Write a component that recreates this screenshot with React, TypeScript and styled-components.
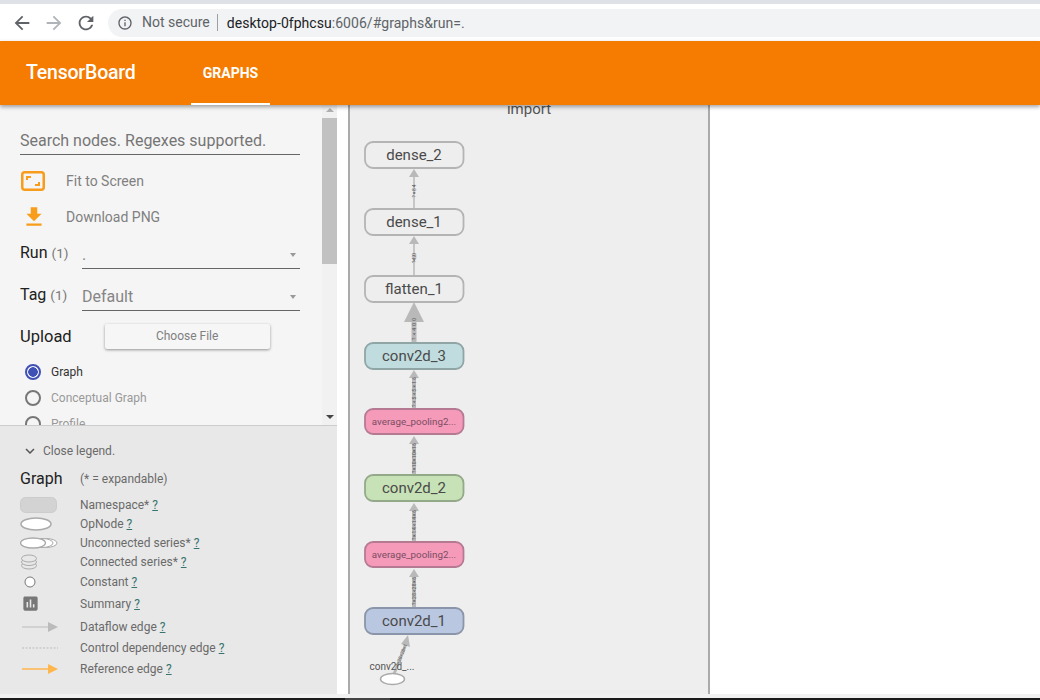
import * as React from 'react'
import styled, { createGlobalStyle } from 'styled-components'
import { MdArrowBack, MdArrowForward, MdRefresh, MdInfoOutline, MdFileDownload, MdExpandMore, MdAssessment } from 'react-icons/md'

const GlobalStyle = createGlobalStyle`
  html, body {
    margin: 0;
    padding: 0;
    background: #fff;
    font-family: Roboto, "Liberation Sans", sans-serif;
  }
`

const Page = styled.div`
  width: 1040px;
  height: 700px;
  display: flex;
  flex-direction: column;
  overflow: hidden;
`

const TabStrip = styled.div`
  height: 4px;
  background: #dee1e6;
`

const BrowserBar = styled.div`
  height: 37px;
  display: flex;
  align-items: center;
  padding-left: 11px;
  background: #fff;
  color: #5f6368;
`

const NavButton = styled.span<{ $muted?: boolean; $last?: boolean }>`
  width: ${p => (p.$last ? 33 : 32)}px;
  height: 24px;
  display: flex;
  align-items: center;
  color: ${p => (p.$muted ? '#b0b3b7' : '#5f6368')};
  font-size: 22px;
`

const AddressPill = styled.div`
  flex: 1;
  height: 28px;
  padding-left: 9px;
  display: flex;
  align-items: center;
  background: #f1f3f4;
  border-radius: 14px 0 0 14px;
  font-size: 14px;
`

const NotSecure = styled.span`
  margin-left: 9px;
  padding-right: 7px;
  color: #5f6368;
  border-right: 1px solid #9aa0a6;
  line-height: 17px;
`

const Url = styled.span`
  margin-left: 9px;
  color: #5f6368;
  letter-spacing: 0.04px;
  b {
    font-weight: 400;
    color: #202124;
  }
`

const Header = styled.header`
  position: relative;
  z-index: 2;
  height: 64px;
  display: flex;
  background: #f57c00;
  color: #fff;
  box-shadow: 0 2px 4px rgba(0, 0, 0, 0.35);
`

const Title = styled.div`
  margin-left: 26px;
  width: 109px;
  font-size: 19.5px;
  font-weight: 500;
  line-height: 64px;
  letter-spacing: -0.2px;
  white-space: nowrap;
`

const Tab = styled.div`
  margin-left: 56px;
  width: 79px;
  text-align: center;
  font-size: 14px;
  font-weight: 700;
  line-height: 64px;
  box-sizing: border-box;
  border-bottom: 2px solid #fff;
`

const Main = styled.main`
  height: 589px;
  display: flex;
`

const Sidebar = styled.aside`
  width: 337px;
  display: flex;
  flex-direction: column;
`

const Controls = styled.div`
  height: 320px;
  display: flex;
  background: #f5f5f5;
  overflow: hidden;
`

const ControlsBody = styled.div`
  width: 322px;
  box-sizing: border-box;
  padding: 0 22px 0 20px;
`

const SearchInput = styled.input`
  display: block;
  width: 280px;
  height: 28px;
  margin: 22px 0 8px;
  box-sizing: border-box;
  padding: 0;
  border: 0;
  border-bottom: 1px solid #666;
  background: transparent;
  font-family: inherit;
  font-size: 16px;
  &::placeholder {
    color: #757575;
    opacity: 1;
  }
`

const ActionRow = styled.div`
  height: 36px;
  display: flex;
  align-items: center;
  color: #808080;
  font-size: 14px;
`

const ActionIcon = styled.span`
  width: 46px;
  box-sizing: border-box;
  padding-left: 1px;
  display: flex;
  color: #f89c1c;
  font-size: 26px;
`

const FieldRow = styled.div<{ $h: number }>`
  height: ${p => p.$h}px;
  display: flex;
  align-items: flex-end;
`

const FieldLabel = styled.span`
  width: 62px;
  padding-bottom: 7px;
  color: #212121;
  font-size: 16px;
  small {
    margin-left: 4px;
    color: #757575;
    font-size: 13.5px;
  }
`

const FieldSelect = styled.div`
  flex: 1;
  height: 28px;
  box-sizing: border-box;
  display: flex;
  align-items: center;
  justify-content: space-between;
  border-bottom: 1px solid #666;
  color: #858585;
  font-size: 16px;
`

const Caret = styled.i`
  width: 0;
  height: 0;
  margin-right: 4px;
  border: 3.5px solid transparent;
  border-top: 4px solid #999;
  border-bottom: 0;
`

const UploadRow = styled.div`
  margin-top: 13px;
  height: 25px;
  display: flex;
  align-items: center;
  color: #212121;
  font-size: 16.5px;
`

const FileButton = styled.div`
  width: 165px;
  height: 25px;
  margin-left: 33px;
  background: #f6f6f6;
  border-radius: 2px;
  box-shadow: 0 1px 3px rgba(0, 0, 0, 0.4);
  color: #808080;
  font-size: 12px;
  line-height: 25px;
  text-align: center;
`

const RadioList = styled.div`
  margin-top: 10px;
  padding-left: 5px;
`

const RadioRow = styled.div<{ $active?: boolean }>`
  height: 26px;
  display: flex;
  align-items: center;
  gap: 10px;
  color: ${p => (p.$active ? '#333' : '#999')};
  font-size: 12px;
`

const RadioDot = styled.span<{ $active?: boolean }>`
  width: 16px;
  height: 16px;
  box-sizing: border-box;
  border-radius: 50%;
  border: 2px solid ${p => (p.$active ? '#3f51b5' : '#777')};
  background: ${p => (p.$active ? 'radial-gradient(circle, #3f51b5 0 4.5px, transparent 5px)' : 'transparent')};
`

const ScrollTrack = styled.div`
  width: 15px;
  display: flex;
  flex-direction: column;
  align-items: center;
  background: #f1f1f1;
`

const ArrowUp = styled.i`
  width: 0;
  height: 0;
  margin-top: 3px;
  border: 4px solid transparent;
  border-bottom: 4px solid #b0b0b0;
  border-top: 0;
`

const ScrollThumb = styled.div`
  width: 100%;
  height: 146px;
  margin-top: 6px;
  background: #c1c1c1;
`

const ArrowDown = styled.i`
  width: 0;
  height: 0;
  margin-top: auto;
  margin-bottom: 6px;
  border: 4px solid transparent;
  border-top: 4px solid #444;
  border-bottom: 0;
`

const Legend = styled.section`
  flex: 1;
  box-sizing: border-box;
  padding: 0 0 0 20px;
  background: #e8e8e8;
  border-top: 1px solid #ccc;
  color: #6a6a6a;
  font-size: 12px;
`

const LegendToggle = styled.div`
  height: 50px;
  padding-left: 1px;
  display: flex;
  align-items: center;
  gap: 4px;
  svg {
    font-size: 18px;
    color: #555;
  }
`

const LegendHead = styled.div`
  height: 19px;
  margin-top: -7px;
  margin-bottom: 7px;
  display: flex;
  align-items: center;
  span:first-child {
    width: 60px;
    color: #212121;
    font-size: 16px;
  }
`

const LegendRow = styled.div<{ $h: number }>`
  height: ${p => p.$h}px;
  display: flex;
  align-items: center;
`

const LegendIcon = styled.span`
  width: 60px;
  height: 100%;
  display: flex;
  align-items: center;
  svg {
    display: block;
  }
`

const SummaryIcon = styled(MdAssessment)`
  margin-left: 1px;
  color: #777;
  font-size: 19px;
`

const Help = styled.a`
  margin-left: 3px;
  color: #37746f;
  text-decoration: underline;
`

const Gutter = styled.div`
  width: 11px;
  background: #fff;
`

const GraphPanel = styled.div`
  width: 362px;
  box-sizing: border-box;
  background: #eee;
  border-left: 2px solid #aaa;
  border-right: 2px solid #aaa;
  svg {
    display: block;
  }
`

const Footer = styled.div`
  height: 4px;
  background: #f1f1f1;
`

const Taskbar = styled.div`
  height: 2px;
  background: #1a1a1a;
  i {
    display: block;
    width: 45px;
    height: 2px;
    margin-left: 345px;
    background: #444;
  }
`

const nodes = [
  { label: 'dense_2', y: 142, h: 26, fill: '#eeeeee', stroke: '#b4b4b4' },
  { label: 'dense_1', y: 209, h: 26, fill: '#eeeeee', stroke: '#b4b4b4' },
  { label: 'flatten_1', y: 276, h: 26, fill: '#eeeeee', stroke: '#b4b4b4' },
  { label: 'conv2d_3', y: 343, h: 26, fill: '#c0dcdf', stroke: '#8fa5a6' },
  { label: 'average_pooling2...', y: 409, h: 25, fill: '#f59ab9', stroke: '#b57a92', small: true },
  { label: 'conv2d_2', y: 475, h: 26, fill: '#c6e2b6', stroke: '#93a98a' },
  { label: 'average_pooling2...', y: 542, h: 25, fill: '#f59ab9', stroke: '#b57a92', small: true },
  { label: 'conv2d_1', y: 608, h: 26, fill: '#bac7e1', stroke: '#8a95a9' },
]

const edges = [
  { y1: 208, y2: 169, w: 1.5, head: 5, len: 8, label: '?×84', ly: 191, span: 13 },
  { y1: 275, y2: 236, w: 1.5, head: 5, len: 8, label: '?×120', ly: 258, span: 10 },
  { y1: 342, y2: 302, w: 5, head: 10, len: 20, label: '?×400', ly: 329, span: 22 },
  { y1: 408, y2: 370, w: 4, head: 5, len: 8, label: '?×5×5×16', ly: 392, span: 30 },
  { y1: 474, y2: 436, w: 4, head: 5, len: 8, label: '?×10×10×16', ly: 458, span: 30 },
  { y1: 541, y2: 503, w: 4, head: 5, len: 8, label: '?×14×14×6', ly: 525, span: 30 },
  { y1: 607, y2: 569, w: 4, head: 5, len: 8, label: '?×28×28×6', ly: 591, span: 28 },
]

const Graph = () => (
  <svg width={358} height={589} viewBox="350 105 358 589">
    <text x={529} y={114} textAnchor="middle" fontSize={15} fill="#555">import</text>
    {edges.map(e => (
      <g key={e.y1}>
        <line x1={414} x2={414} y1={e.y1} y2={e.y2 + e.len} stroke="#b9b9b9" strokeWidth={e.w} />
        <polygon points={`414,${e.y2} ${414 - e.head},${e.y2 + e.len} ${414 + e.head},${e.y2 + e.len}`} fill="#b9b9b9" />
        <text
          x={414}
          y={e.ly}
          fontSize={5}
          fill="#555"
          textAnchor="middle"
          dominantBaseline="central"
          textLength={e.span}
          transform={`rotate(-90 414 ${e.ly})`}
        >
          {e.label}
        </text>
      </g>
    ))}
    <line x1={394} y1={674} x2={406} y2={644} stroke="#b9b9b9" strokeWidth={3} />
    <polygon points="408,635 401,644 410,647" fill="#b9b9b9" />
    <text
      x={401}
      y={655}
      fontSize={5}
      fill="#666"
      textAnchor="middle"
      dominantBaseline="central"
      textLength={24}
      transform="rotate(-68 401 655)"
    >
      ?×28×28×1
    </text>
    {nodes.map(n => (
      <g key={n.y}>
        <rect x={365} y={n.y} width={98.5} height={n.h} rx={8} fill={n.fill} stroke={n.stroke} strokeWidth={1.8} />
        <text
          x={414}
          y={n.y + n.h / 2}
          textAnchor="middle"
          dominantBaseline="central"
          fontSize={n.small ? 9.8 : 15}
          fill={n.small ? '#7a4d62' : '#4a4a4a'}
        >
          {n.label}
        </text>
      </g>
    ))}
    <text x={392} y={670} textAnchor="middle" fontSize={10} fill="#555">conv2d_...</text>
    <ellipse cx={392.5} cy={679} rx={12} ry={5.5} fill="#fff" stroke="#aaa" strokeWidth={1.5} />
  </svg>
)

const FitIcon = () => (
  <svg width={24} height={20} viewBox="0 0 24 20" fill="none" stroke="#f89c1c">
    <rect x={1.25} y={1.25} width={21.5} height={17.5} rx={2.5} strokeWidth={2.5} />
    <path d="M6 9V6h4M18 11v3h-4" strokeWidth={2} />
  </svg>
)

const legendIcons = {
  namespace: (
    <svg width={40} height={16} viewBox="0 0 40 16">
      <rect x={0.5} y={0.5} width={36} height={15} rx={5} fill="#d3d3d3" stroke="#ccc" />
    </svg>
  ),
  op: (
    <svg width={40} height={14} viewBox="0 0 40 14">
      <ellipse cx={16} cy={7} rx={15} ry={6} fill="#fff" stroke="#aaa" strokeWidth={1.5} />
    </svg>
  ),
  series: (
    <svg width={40} height={12} viewBox="0 0 40 12" fill="#fff" stroke="#aaa">
      <ellipse cx={26} cy={6} rx={11} ry={4.5} />
      <ellipse cx={22} cy={6} rx={11} ry={4.5} />
      <ellipse cx={13} cy={6} rx={12.5} ry={5} strokeWidth={1.3} />
    </svg>
  ),
  connected: (
    <svg width={40} height={16} viewBox="0 0 40 16" fill="#e8e8e8" stroke="#aaa">
      <ellipse cx={9} cy={11.5} rx={7.5} ry={3.5} />
      <ellipse cx={9} cy={8} rx={7.5} ry={3.5} />
      <ellipse cx={9} cy={4.5} rx={7.5} ry={3.5} />
    </svg>
  ),
  constant: (
    <svg width={40} height={12} viewBox="0 0 40 12">
      <circle cx={10} cy={6} r={5} fill="#fff" stroke="#777" />
    </svg>
  ),
  summary: <SummaryIcon />,
  dataflow: (
    <svg width={40} height={12} viewBox="0 0 40 12">
      <line x1={2} x2={30} y1={6} y2={6} stroke="#bbb" />
      <polygon points="28,1 38,6 28,11" fill="#bbb" />
    </svg>
  ),
  control: (
    <svg width={40} height={4} viewBox="0 0 40 4">
      <line x1={2} x2={38} y1={2} y2={2} stroke="#bbb" strokeDasharray="2 1.5" />
    </svg>
  ),
  reference: (
    <svg width={40} height={12} viewBox="0 0 40 12">
      <line x1={2} x2={30} y1={6} y2={6} stroke="#ffb74d" strokeWidth={1.5} />
      <polygon points="28,1 38,6 28,11" fill="#ffb74d" />
    </svg>
  ),
}

const legend = [
  { icon: legendIcons.namespace, label: 'Namespace*', h: 19 },
  { icon: legendIcons.op, label: 'OpNode', h: 19 },
  { icon: legendIcons.series, label: 'Unconnected series*', h: 19 },
  { icon: legendIcons.connected, label: 'Connected series*', h: 20 },
  { icon: legendIcons.constant, label: 'Constant', h: 20 },
  { icon: legendIcons.summary, label: 'Summary', h: 23 },
  { icon: legendIcons.dataflow, label: 'Dataflow edge', h: 23 },
  { icon: legendIcons.control, label: 'Control dependency edge', h: 19 },
  { icon: legendIcons.reference, label: 'Reference edge', h: 23 },
]

export default function App() {
  return (
    <Page>
      <GlobalStyle />
      <TabStrip />
      <BrowserBar>
        <NavButton><MdArrowBack /></NavButton>
        <NavButton $muted><MdArrowForward /></NavButton>
        <NavButton $last><MdRefresh /></NavButton>
        <AddressPill>
          <MdInfoOutline size={16} />
          <NotSecure>Not secure</NotSecure>
          <Url><b>desktop-0fphcsu</b>:6006/#graphs&amp;run=.</Url>
        </AddressPill>
      </BrowserBar>
      <Header>
        <Title>TensorBoard</Title>
        <Tab>GRAPHS</Tab>
      </Header>
      <Main>
        <Sidebar>
          <Controls>
            <ControlsBody>
              <SearchInput placeholder="Search nodes. Regexes supported." readOnly />
              <ActionRow>
                <ActionIcon><FitIcon /></ActionIcon>
                Fit to Screen
              </ActionRow>
              <ActionRow>
                <ActionIcon><MdFileDownload /></ActionIcon>
                Download PNG
              </ActionRow>
              <FieldRow $h={34}>
                <FieldLabel>Run<small>(1)</small></FieldLabel>
                <FieldSelect>.<Caret /></FieldSelect>
              </FieldRow>
              <FieldRow $h={42}>
                <FieldLabel>Tag<small>(1)</small></FieldLabel>
                <FieldSelect>Default<Caret /></FieldSelect>
              </FieldRow>
              <UploadRow>
                Upload
                <FileButton>Choose File</FileButton>
              </UploadRow>
              <RadioList>
                <RadioRow $active><RadioDot $active />Graph</RadioRow>
                <RadioRow><RadioDot />Conceptual Graph</RadioRow>
                <RadioRow><RadioDot />Profile</RadioRow>
              </RadioList>
            </ControlsBody>
            <ScrollTrack>
              <ArrowUp />
              <ScrollThumb />
              <ArrowDown />
            </ScrollTrack>
          </Controls>
          <Legend>
            <LegendToggle><MdExpandMore />Close legend.</LegendToggle>
            <LegendHead><span>Graph</span><span>(* = expandable)</span></LegendHead>
            {legend.map(row => (
              <LegendRow key={row.label} $h={row.h}>
                <LegendIcon>{row.icon}</LegendIcon>
                {row.label}
                <Help>?</Help>
              </LegendRow>
            ))}
          </Legend>
        </Sidebar>
        <Gutter />
        <GraphPanel><Graph /></GraphPanel>
      </Main>
      <Footer />
      <Taskbar><i /></Taskbar>
    </Page>
  )
}
